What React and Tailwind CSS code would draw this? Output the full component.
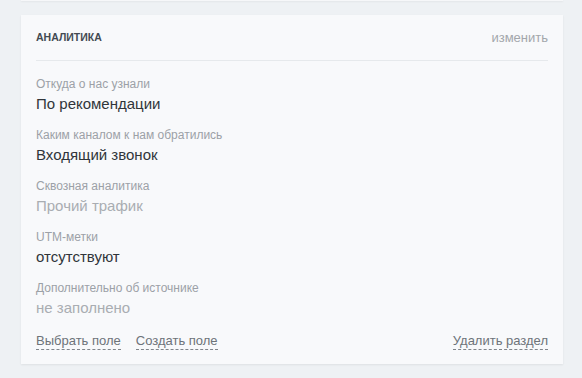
const fields = [
  { label: 'Откуда о нас узнали', value: 'По рекомендации', empty: false },
  { label: 'Каким каналом к нам обратились', value: 'Входящий звонок', empty: false },
  { label: 'Сквозная аналитика', value: 'Прочий трафик', empty: true },
  { label: 'UTM-метки', value: 'отсутствуют', empty: false },
  { label: 'Дополнительно об источнике', value: 'не заполнено', empty: true },
];

export default function App() {
  return (
    <div className="min-h-[378px] w-[582px] bg-[#eef1f4] font-['Liberation_Sans',Arial,sans-serif]">
      {/* previous card, only its bottom edge is visible */}
      <div className="ml-[21px] h-[1px] w-[542px] bg-[#f6f7f9] shadow-[0_1px_2px_rgba(0,0,0,0.07)]" />

      <div className="ml-[21px] mt-[14px] w-[542px] bg-[#f8f9fb] px-[15px] pb-[14px] shadow-[0_1px_2px_rgba(0,0,0,0.07)]">
        <div className="flex h-[46px] items-center justify-between border-b border-[#e6e9ec] pt-[1px]">
          <h3 className="text-[10.5px] font-bold uppercase text-[#434a52]">Аналитика</h3>
          <button className="text-[13px] text-[#a3a7ab]">изменить</button>
        </div>

        <div className="flex flex-col gap-[15px] pt-[16px]">
          {fields.map((f) => (
            <div key={f.label}>
              <div className="text-[12px] leading-[14px] text-[#9ca1a7]">{f.label}</div>
              <div
                className={
                  'mt-[4px] text-[15px] leading-[18px] ' +
                  (f.empty ? 'text-[#a9adb2]' : 'text-[#30353a]')
                }
              >
                {f.value}
              </div>
            </div>
          ))}
        </div>

        <div className="mt-[16px] flex items-center justify-between">
          <div className="flex gap-[15px]">
            <button className="border-b border-dashed border-[#80858b] text-[13px] leading-[16px] text-[#6d7379]">
              Выбрать поле
            </button>
            <button className="border-b border-dashed border-[#80858b] text-[13px] leading-[16px] text-[#6d7379]">
              Создать поле
            </button>
          </div>
          <button className="border-b border-dashed border-[#80858b] text-[13px] leading-[16px] text-[#6d7379]">
            Удалить раздел
          </button>
        </div>
      </div>
    </div>
  );
}
